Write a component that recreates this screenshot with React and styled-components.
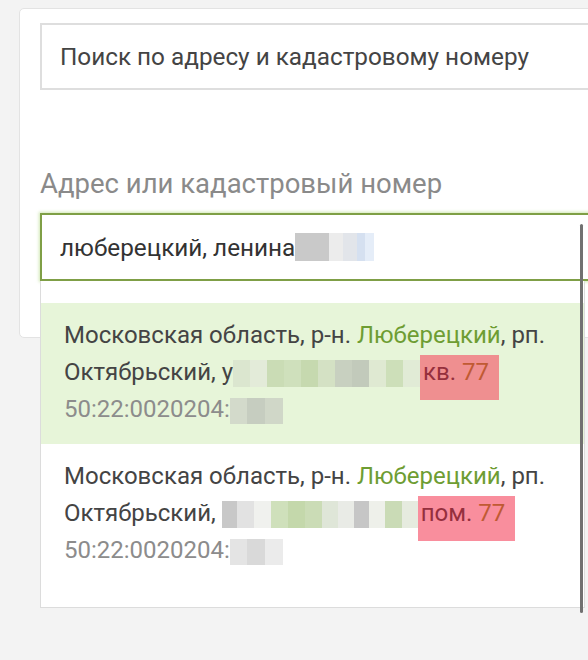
import React from "react";
import styled, { createGlobalStyle } from "styled-components";

const GlobalStyle = createGlobalStyle`
  html, body {
    margin: 0;
    padding: 0;
    background: #f3f3f3;
    overflow: hidden;
  }
  body {
    font-family: Roboto, "Noto Sans", sans-serif;
  }
`;

const Page = styled.div`
  width: 588px;
  height: 660px;
  overflow: hidden;
  box-sizing: border-box;
  padding: 8px 0 0 19px;
`;

const Card = styled.div`
  width: 640px;
  height: 330px;
  box-sizing: border-box;
  background: #fff;
  border: 1px solid #e3e3e3;
  border-radius: 5px;
  padding: 14px 0 0 20px;
`;

const Select = styled.div`
  width: 600px;
  height: 67px;
  box-sizing: border-box;
  display: flex;
  align-items: center;
  padding-left: 18px;
  border: 2px solid #dedede;
  font-size: 24.3px;
  color: #444;
`;

const Label = styled.div`
  margin-top: 78px;
  font-size: 27.5px;
  line-height: 32px;
  color: #8a8a8a;
`;

const Field = styled.div`
  position: relative;
  margin-top: 13px;
`;

const Input = styled.div`
  width: 600px;
  height: 68px;
  box-sizing: border-box;
  display: flex;
  align-items: center;
  padding-left: 18px;
  border: 2px solid #7f9f46;
  box-shadow: 0 0 3px 1px rgba(176, 214, 128, 0.6);
  font-size: 24.3px;
  color: #333;
`;

const Dropdown = styled.div`
  position: absolute;
  top: 68px;
  left: 0;
  width: 545px;
  box-sizing: border-box;
  background: #fff;
  border: 1px solid #dcdcdc;
  border-top: none;
  padding: 22px 0 22px;
  z-index: 2;
`;

const Item = styled.div`
  padding: 14px 20px 16px 23px;
  background: ${(p) => (p.$active ? "#e7f5d9" : "#fff")};
  font-size: 24px;
  line-height: 37px;
  color: #444;
`;

const Line = styled.div`
  white-space: nowrap;
`;

const Region = styled.span`
  color: #6e9d33;
`;

const Cadastral = styled.div`
  color: #8c8c8c;
  white-space: nowrap;
`;

const Mark = styled.span`
  background: ${(p) => p.$bg};
  padding: 3px 10px 14px 3px;
`;

const MarkWord = styled.span`
  color: #952f3d;
`;

const MarkNum = styled.span`
  color: #c05a33;
`;

const Scrollbar = styled.div`
  position: absolute;
  left: 540px;
  top: 11px;
  width: 3px;
  height: 389px;
  border-radius: 2px;
  background: #717171;
  z-index: 3;
`;

const Blur = styled.span`
  display: inline-flex;
  vertical-align: middle;
  height: ${(p) => p.$h}px;
`;

const Cell = styled.span`
  display: block;
  width: ${(p) => p.$w}px;
  height: 100%;
  background: ${(p) => p.$c};
`;

function Pixels({ cells, h = 27 }) {
  return (
    <Blur $h={h}>
      {cells.map(([c, w], i) => (
        <Cell key={i} $c={c} $w={w} />
      ))}
    </Blur>
  );
}

const inputBlur = [
  ["#c9c9c9", 34],
  ["#ececec", 14],
  ["#e2e5ea", 14],
  ["#d5e0f0", 8],
  ["#e5edf8", 9],
];

const street1 = [
  ["#dbe6cf", 17],
  ["#e3ebd9", 17],
  ["#cadcb5", 17],
  ["#cfe0bc", 17],
  ["#c6d9af", 17],
  ["#d4e1c4", 17],
  ["#c8d0c0", 17],
  ["#c2cabb", 17],
  ["#dfe9d2", 17],
  ["#cddfb9", 17],
  ["#e1ebd6", 17],
];

const street2 = [
  ["#c8c8c8", 15],
  ["#e2e2e2", 17],
  ["#f0f1ee", 17],
  ["#cfe0bb", 17],
  ["#c4d8ab", 17],
  ["#cbdcb6", 17],
  ["#dfe6d8", 16],
  ["#e9ebe6", 16],
  ["#c6c6c6", 15],
  ["#eef0ea", 16],
  ["#cadbb6", 17],
  ["#e6ebdf", 16],
];

const cad1 = [
  ["#d3dacb", 17],
  ["#c6cdc0", 18],
  ["#d0d7c8", 18],
];

const cad2 = [
  ["#e4e4e4", 17],
  ["#d9d9d9", 18],
  ["#ebebeb", 18],
];

const results = [
  { active: true, street: street1, prefix: "у", word: "кв.", mark: "#ef8f90", cad: cad1 },
  { active: false, street: street2, prefix: "", word: "пом.", mark: "#f98e9d", cad: cad2 },
];

export default function App() {
  return (
    <>
      <GlobalStyle />
      <Page>
        <Card>
          <Select>Поиск по адресу и кадастровому номеру</Select>
          <Label>Адрес или кадастровый номер</Label>
          <Field>
            <Input>
              люберецкий, ленина
              <Pixels cells={inputBlur} h={28} />
            </Input>
            <Dropdown>
              {results.map((r, i) => (
                <Item key={i} $active={r.active}>
                  <Line>
                    Московская область, р-н. <Region>Люберецкий</Region>, рп.
                  </Line>
                  <Line>
                    Октябрьский, {r.prefix}
                    <Pixels cells={r.street} />
                    <Mark $bg={r.mark}>
                      <MarkWord>{r.word}</MarkWord> <MarkNum>77</MarkNum>
                    </Mark>
                  </Line>
                  <Cadastral>
                    50:22:0020204:
                    <Pixels cells={r.cad} h={26} />
                  </Cadastral>
                </Item>
              ))}
            </Dropdown>
            <Scrollbar />
          </Field>
        </Card>
      </Page>
    </>
  );
}
